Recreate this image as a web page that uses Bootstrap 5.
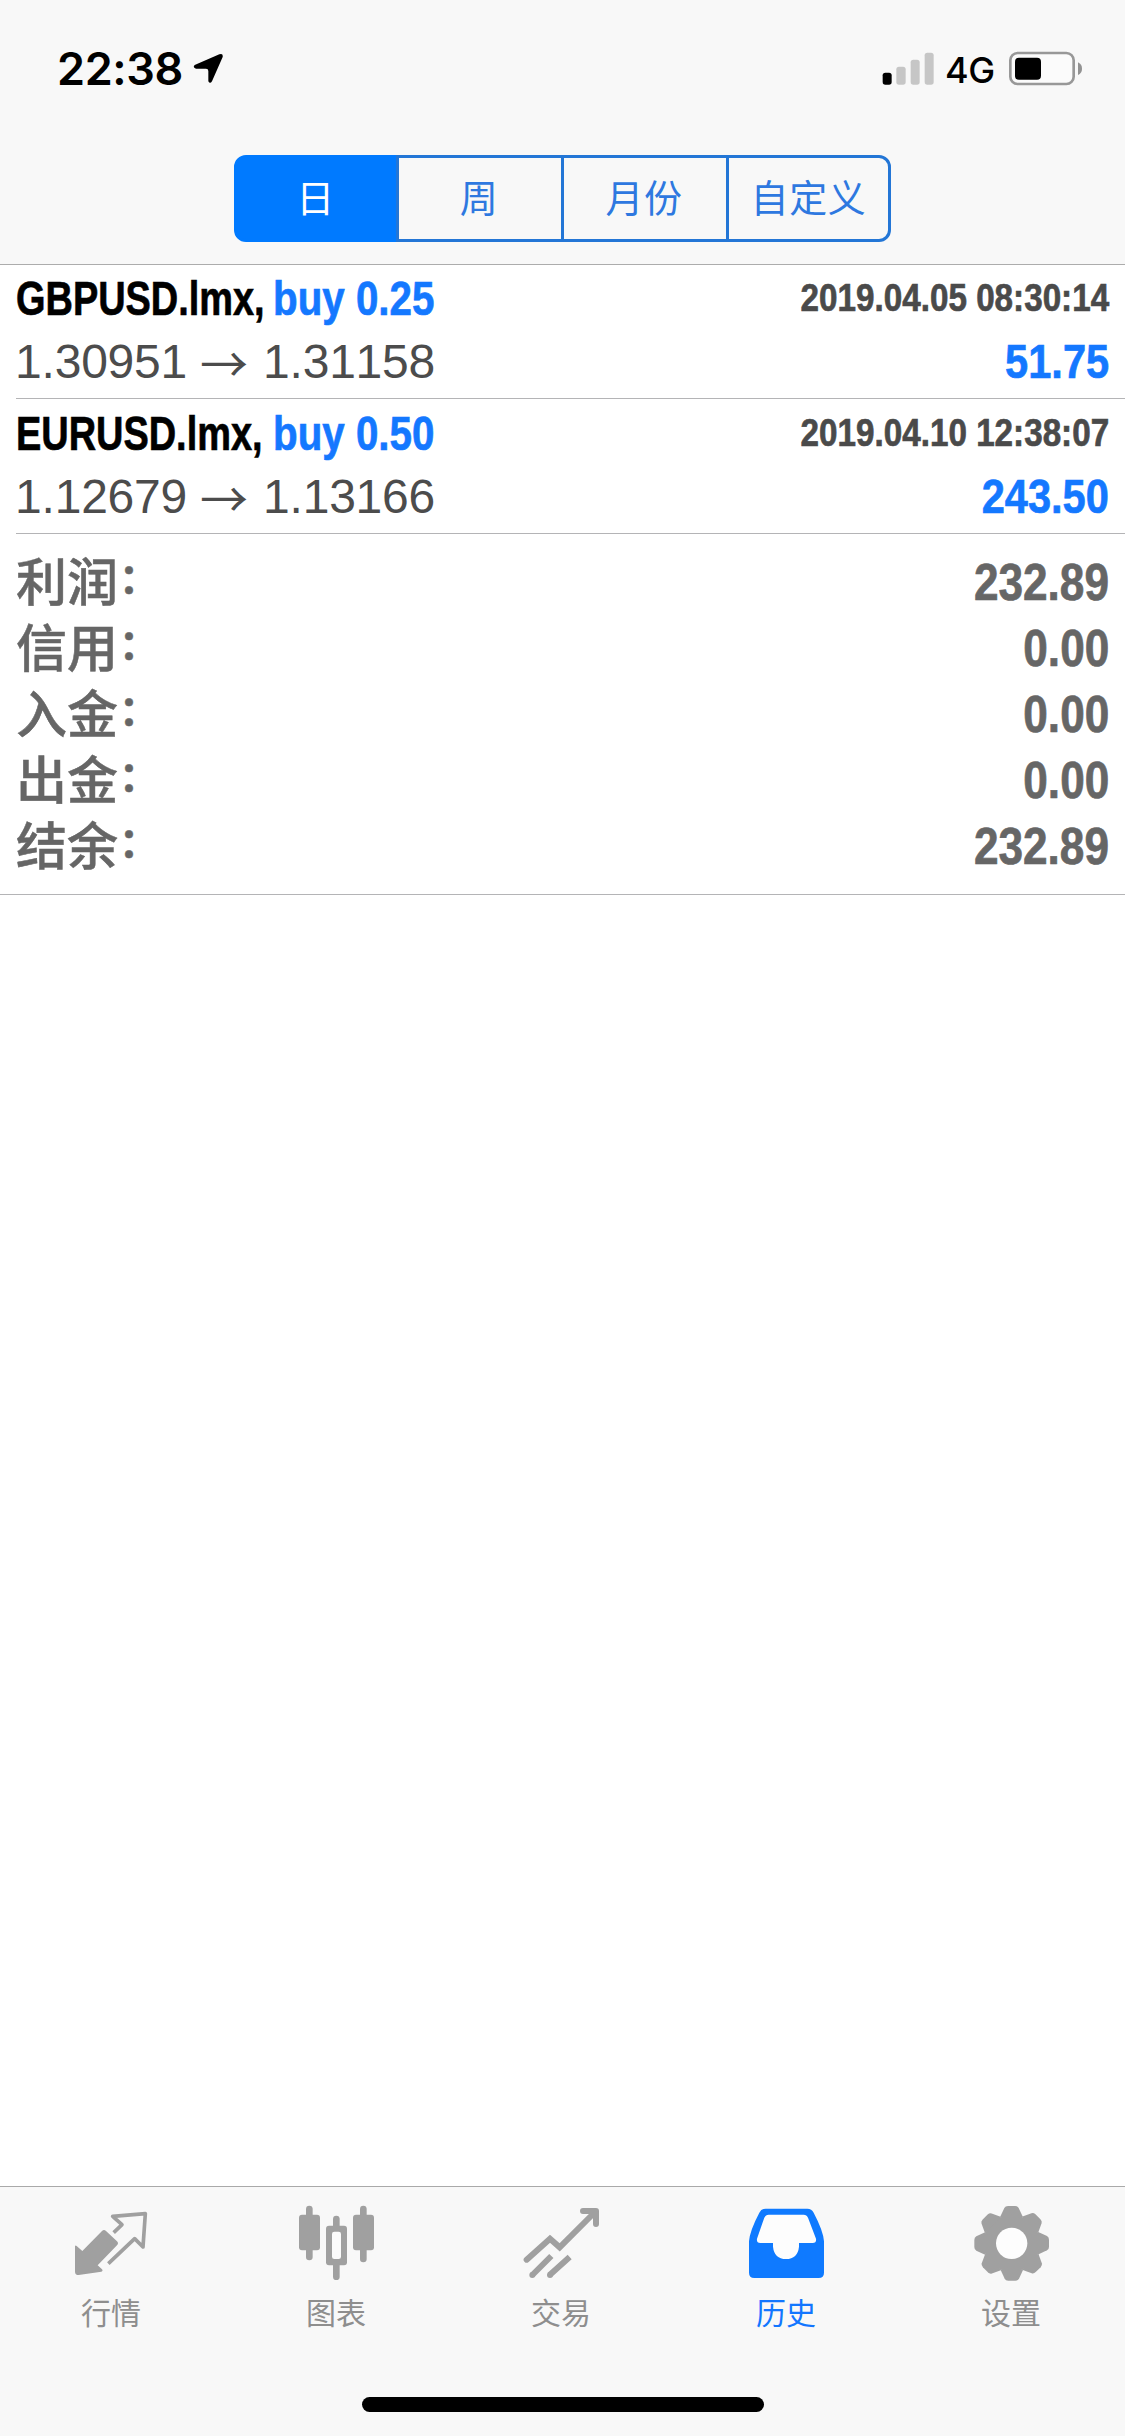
<!DOCTYPE html>
<html lang="zh-CN">
<head>
<meta charset="utf-8">
<meta name="viewport" content="width=device-width, initial-scale=1">
<title>历史</title>
<link href="https://cdn.jsdelivr.net/npm/bootstrap@5.3.0/dist/css/bootstrap.min.css" rel="stylesheet">
<style>
  :root { --ios-blue: #007aff; --bar: #f8f8f8; --cjk: "Noto Sans CJK SC", sans-serif; }
  body { font-family: "Liberation Sans", "Noto Sans CJK SC", sans-serif; min-height: 2436px; background: #fff; }
  svg { display: block; }
  .app-head { height: 265px; background: var(--bar); border-bottom: 1px solid #acacac; }
  .status-line { height: 155px; padding-left: 57px; font-family: Inter, sans-serif; color: #000; }
  .clock { font-size: 45px; font-weight: 600; line-height: 60px; margin-top: 39px; width: 136px; letter-spacing: -.4px; }
  .net-type { font-size: 36px; font-weight: 500; line-height: 60px; margin-top: 40px; width: 66px; letter-spacing: -.3px; }
  .periods { width: 657px; height: 87px; }
  .periods .btn { flex: none; width: 168px; border: 3px solid #2376d6; color: #2e78e0; border-radius: 12px; padding: 0 2px 6px 0; font: 400 38px/73px var(--cjk); letter-spacing: .6px; }
  .periods .btn:first-child, .periods .btn:last-child { width: 165px; }
  .periods .btn:last-child { padding-right: 0; }
  .periods .btn:not(:first-child) { margin-left: -3px !important; }
  .periods .btn.active { background: var(--ios-blue); border-color: var(--ios-blue); color: #fff; z-index: 0; }
  .deal { margin-left: 16px; padding: 2px 16px 0 0; height: 134px; border-bottom: 1px solid #b4b4b6; line-height: 63px; }
  .deal + .deal { height: 135px; padding-top: 3px; }
  .narrow { display: inline-block; font-weight: 700; white-space: nowrap; font-size: 48px; -webkit-text-stroke: .7px currentColor; }
  .symbol { width: 257px; transform: scaleX(.79); transform-origin: 0 50%; color: #000; }
  .side { transform: scaleX(.84); transform-origin: 0 50%; color: #1478ff; }
  .stamp, .gain, .total { transform: scaleX(.866); transform-origin: 100% 50%; }
  .stamp { font-size: 39px; line-height: 61px; color: #4a4a4a; transform: scaleX(.852); }
  .gain { color: #1478ff; }
  .quote { font-size: 48px; color: #4c4c4c; white-space: nowrap; font-kerning: none; letter-spacing: -.2px; }
  .quote span:first-child { width: 184px; margin-left: -1px; margin-right: 1px; }
  .quote .arrow-to { width: 63px; font-family: "Noto Sans CJK SC", sans-serif; }
  .summary { padding: 16px 16px 14px; border-bottom: 1px solid #b4b4b6; color: #666; }
  .sum-line { height: 66px; line-height: 66px; }
  .sum-name { font-weight: 500; font-size: 51px; padding-top: 1px; -webkit-text-stroke: .5px currentColor; }
  .sum-name i { font-style: normal; font-size: 40px; font-weight: 700; line-height: 1; position: relative; top: -8px; left: 1px; }
  .total { font-size: 51px; }
  .tabs { height: 250px; background: var(--bar); border-top: 1px solid #a9a9a9; }
  .tab-cell { width: 225px; padding-top: 10px; color: #8e8e8e; font: 400 30px/44px var(--cjk); text-decoration: none; }
  .tab-cell span { padding: 2px 3px 0 0; }
  .tab-cell svg { fill: #a0a0a0; }
  .tab-cell.on { color: #1276ff; }
  .tab-cell.on svg { fill: #0f7aff; }
  .home-bar { width: 402px; height: 15px; border-radius: 8px; background: #000; margin: 0 auto 24px; }
</style>
</head>
<body class="d-flex flex-column">
<header class="app-head d-flex flex-column align-items-center">
  <div class="status-line d-flex w-100 align-items-start">
    <div class="clock">22:38</div>
    <svg width="32" height="32" viewBox="579 69 96 96" style="margin-top:53px"><path d="M584 105L658 73Q670 69 668 81L636 154Q630 163 625 154V123Q625 116 618 116H588Q577 113 584 105Z"/></svg>
    <svg class="ms-auto" width="55" height="34" viewBox="64 67 165 102" style="margin-top:52px"><rect x="66" y="129" width="27" height="36" rx="8"/><g fill="#c6c6c6"><rect x="107" y="111" width="28" height="54" rx="8"/><rect x="150" y="90" width="27" height="75" rx="8"/><rect x="192" y="69" width="27" height="96" rx="8"/></g></svg>
    <div class="net-type ps-2">4G</div>
    <svg width="76" height="36" viewBox="444 64 228 108" style="margin:51px 41px 0 5px"><rect x="451" y="70" width="190" height="93" rx="22" fill="#fbfbfb" stroke="#989898" stroke-width="8"/><rect x="465" y="84" width="78" height="66" rx="12"/><path d="M654 98Q666 104 666 117T654 136Z" fill="#929292"/></svg>
  </div>
  <div class="btn-group periods" role="group">
    <button type="button" class="btn active">日</button>
    <button type="button" class="btn">周</button>
    <button type="button" class="btn">月份</button>
    <button type="button" class="btn">自定义</button>
  </div>
</header>
<main class="flex-grow-1">
  <section class="deal">
    <div class="d-flex justify-content-between align-items-start">
      <div class="d-flex"><span class="narrow symbol">GBPUSD.lmx,</span><span class="narrow side">buy 0.25</span></div>
      <span class="narrow stamp">2019.04.05 08:30:14</span>
    </div>
    <div class="d-flex justify-content-between">
      <div class="quote d-flex"><span>1.30951</span><span class="arrow-to">→</span><span>1.31158</span></div>
      <span class="narrow gain">51.75</span>
    </div>
  </section>
  <section class="deal">
    <div class="d-flex justify-content-between align-items-start">
      <div class="d-flex"><span class="narrow symbol">EURUSD.lmx,</span><span class="narrow side">buy 0.50</span></div>
      <span class="narrow stamp">2019.04.10 12:38:07</span>
    </div>
    <div class="d-flex justify-content-between">
      <div class="quote d-flex"><span>1.12679</span><span class="arrow-to">→</span><span>1.13166</span></div>
      <span class="narrow gain">243.50</span>
    </div>
  </section>
  <section class="summary">
    <div class="sum-line d-flex justify-content-between"><span class="sum-name">利润<i>：</i></span><span class="narrow total">232.89</span></div>
    <div class="sum-line d-flex justify-content-between"><span class="sum-name">信用<i>：</i></span><span class="narrow total">0.00</span></div>
    <div class="sum-line d-flex justify-content-between"><span class="sum-name">入金<i>：</i></span><span class="narrow total">0.00</span></div>
    <div class="sum-line d-flex justify-content-between"><span class="sum-name">出金<i>：</i></span><span class="narrow total">0.00</span></div>
    <div class="sum-line d-flex justify-content-between"><span class="sum-name">结余<i>：</i></span><span class="narrow total">232.89</span></div>
  </section>
</main>
<footer class="tabs d-flex flex-column justify-content-between">
  <nav class="d-flex">
    <a class="tab-cell d-flex flex-column align-items-center" href="#">
      <svg width="91" height="90" viewBox="51 51 273 270"><path d="M75 199Q76 194 80 198L97 213L156 153Q162 147 168 153L201 184Q207 190 201 196L143 256L156 268Q160 273 154 275L86 285Q75 285 75 275Z"/><path fill="none" stroke="#a0a0a0" stroke-width="11" stroke-linejoin="round" d="M191 158L216 134L188 109L286 101L279 201L254 176L175 251"/></svg>
      <span>行情</span>
    </a>
    <a class="tab-cell d-flex flex-column align-items-center" href="#">
      <svg width="91" height="90" viewBox="726 51 273 270"><rect x="768" y="77" width="20" height="164" rx="10"/><rect x="747" y="104" width="63" height="107" rx="9"/><rect x="930" y="77" width="20" height="170" rx="10"/><rect x="909" y="104" width="63" height="107" rx="9"/><rect x="849" y="107" width="20" height="193" rx="10"/><rect x="828" y="137" width="63" height="119" rx="9"/><rect x="846" y="155" width="27" height="82" rx="7" fill="#fbfbfb"/></svg>
      <span>图表</span>
    </a>
    <a class="tab-cell d-flex flex-column align-items-center" href="#">
      <svg width="91" height="90" viewBox="51 51 273 270"><g fill="none" stroke="#a0a0a0" stroke-width="18" stroke-linejoin="miter"><path stroke-linecap="round" d="M80 239L150 176L179 202L282 99"/><path stroke-linecap="round" stroke-linejoin="round" d="M249 93H288V132"/><path d="M154 228L97 285M209 231L149 285"/></g><circle cx="97" cy="285" r="9"/><circle cx="150" cy="285" r="9"/></svg>
      <span>交易</span>
    </a>
    <a class="tab-cell on d-flex flex-column align-items-center" href="#">
      <svg width="91" height="90" viewBox="726 51 273 270"><path d="M797 86H922Q935 86 941 98Q970 153 972 184V278Q972 294 956 294H763Q747 294 747 278V184Q749 153 778 98Q784 86 797 86Z"/><path fill="#fdfdfd" d="M806 104H911Q920 104 924 113L948 176Q950 189 938 189H897V200Q893 237 858 237T819 200V189H781Q769 189 771 176L793 113Q797 104 806 104Z"/></svg>
      <span>历史</span>
    </a>
    <a class="tab-cell d-flex flex-column align-items-center" href="#">
      <svg width="91" height="90" viewBox="81 51 273 270"><defs><path id="tooth" d="M180 112L193 84Q196 78 204 78H225Q233 78 236 84L249 112Z"/></defs><circle cx="215" cy="190" r="85"/><use href="#tooth"/><use href="#tooth" transform="rotate(45 215 190)"/><use href="#tooth" transform="rotate(90 215 190)"/><use href="#tooth" transform="rotate(135 215 190)"/><use href="#tooth" transform="rotate(180 215 190)"/><use href="#tooth" transform="rotate(225 215 190)"/><use href="#tooth" transform="rotate(270 215 190)"/><use href="#tooth" transform="rotate(315 215 190)"/><circle cx="215" cy="190" r="47" fill="#fdfdfd"/></svg>
      <span>设置</span>
    </a>
  </nav>
  <div class="home-bar"></div>
</footer>
<script src="https://cdn.jsdelivr.net/npm/bootstrap@5.3.0/dist/js/bootstrap.bundle.min.js"></script>
</body>
</html>
